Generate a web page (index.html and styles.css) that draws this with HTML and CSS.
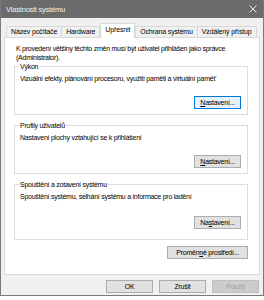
FILE: index.html
```html
<!DOCTYPE html>
<html lang="cs">
<head>
    <meta charset="UTF-8">
    <title>Vlastnosti systému</title>
    <link rel="stylesheet" href="styles.css">
</head>
<body>
    <div class="window">
        <div class="titlebar">
            <span class="title">Vlastnosti systému</span>
            <svg class="close" width="8" height="8" viewBox="0 0 8 8">
                <path d="M0.5 0.5 L7.5 7.5 M7.5 0.5 L0.5 7.5" stroke="#e6e6e6" stroke-width="1" fill="none"/>
            </svg>
        </div>

        <div class="content">
            <!-- tab strip -->
            <div class="tabs">
                <div class="tab">Název počítače</div>
                <div class="tab">Hardware</div>
                <div class="tab active">Upřesnit</div>
                <div class="tab">Ochrana systému</div>
                <div class="tab">Vzdálený přístup</div>
            </div>

            <div class="panel">
                <p class="intro">K provedení většiny těchto změn musí být uživatel přihlášen jako správce (Administrator).</p>

                <fieldset class="group">
                    <legend>Výkon</legend>
                    <p>Vizuální efekty, plánování procesoru, využití paměti a virtuální paměť</p>
                    <div class="row">
                        <button class="btn focused"><u>N</u>astavení...</button>
                    </div>
                </fieldset>

                <fieldset class="group">
                    <legend>Profily uživatelů</legend>
                    <p>Nastavení plochy vztahující se k přihlášení</p>
                    <div class="row">
                        <button class="btn"><u>N</u>astavení...</button>
                    </div>
                </fieldset>

                <fieldset class="group tall">
                    <legend>Spouštění a zotavení systému</legend>
                    <p>Spouštění systému, selhání systému a informace pro ladění</p>
                    <div class="row">
                        <button class="btn">Na<u>s</u>tavení...</button>
                    </div>
                </fieldset>

                <div class="env">
                    <button class="btn wide">Proměn<u>n</u>é prostředí...</button>
                </div>
            </div>

            <div class="footer">
                <button class="btn">OK</button>
                <button class="btn">Zrušit</button>
                <button class="btn" disabled>Použí<u>t</u></button>
            </div>
        </div>
    </div>
</body>
</html>
```

FILE: styles.css
```css
html, body {
    margin: 0;
    padding: 0;
    background-color: #ffffff;
}
body {
    font-family: "Liberation Sans", Arial, sans-serif;
    font-size: 7px;
    letter-spacing: -0.25px;
    color: #000;
}
.window {
    width: 262px;
    height: 295px;
    border: 1px solid #7a7a7a;
    border-top: none;
    background-color: #f0f0f0;
}
.titlebar {
    height: 18px;
    background-color: #6b6b6b;
    display: flex;
    align-items: center;
    justify-content: space-between;
    padding: 0 6px 0 5px;
}
.title {
    color: #f2f2f2;
    font-size: 7.5px;
    letter-spacing: -0.2px;
}
.content {
    padding: 0 3px;
}
.tabs {
    display: flex;
    align-items: flex-end;
    height: 19px;
    padding-left: 2px;
}
.tab {
    height: 10px;
    line-height: 10px;
    padding: 0 4px;
    letter-spacing: -0.15px;
    border: 1px solid #d9d9d9;
    border-bottom: none;
    margin-right: -1px;
    background-color: #f0f0f0;
    white-space: nowrap;
}
.tab.active {
    height: 14px;
    line-height: 12px;
    background-color: #fff;
    position: relative;
    z-index: 1;
    margin-bottom: -1px;
    margin-left: 1px;
    margin-right: 0;
}
.panel {
    height: 230px;
    background-color: #fff;
    border: 1px solid #d9d9d9;
    padding-top: 6px;
}
.intro {
    margin: 0 10px 0 11px;
    line-height: 9px;
}
.group {
    margin: 0 11px 6px 9px;
    padding: 3px 6px 5px 5px;
    border: 1px solid #dcdcdc;
    min-width: 0;
}
.group legend {
    padding: 0 1px;
    margin-left: -1px;
    line-height: 9px;
}
.group p {
    margin: 0;
    line-height: 9px;
}
.row {
    display: flex;
    justify-content: flex-end;
    margin-top: 13px;
}
.group.tall .row {
    margin-top: 15px;
}
.group.tall {
    padding-bottom: 10px;
}
.btn {
    font-family: inherit;
    font-size: 7px;
    letter-spacing: -0.25px;
    width: 47px;
    height: 13px;
    padding: 0;
    background-color: #e1e1e1;
    border: 1px solid #adadad;
    color: #000;
}
.btn.focused {
    border-color: #0078d7;
    background-color: #e5f1fb;
}
.btn.wide {
    width: 81px;
}
.btn:disabled {
    background-color: #cccccc;
    border-color: #bfbfbf;
    color: #a0a0a0;
}
.env {
    display: flex;
    justify-content: flex-end;
    margin: 3px 11px 0 0;
}
.footer {
    display: flex;
    justify-content: flex-end;
    gap: 6px;
    padding: 5px 1px 0 0;
}
```
